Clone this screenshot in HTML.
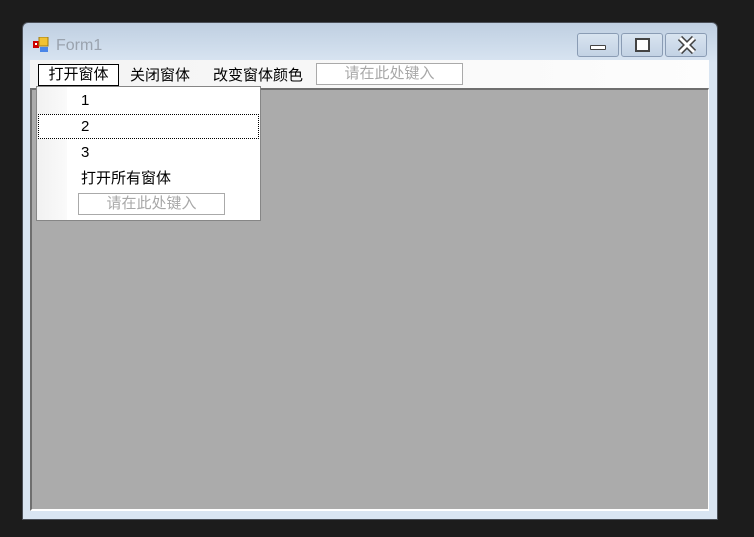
<!DOCTYPE html>
<html><head><meta charset="utf-8"><style>
*{margin:0;padding:0;box-sizing:border-box}
body{width:754px;height:537px;background:#1c1c1c;position:relative;overflow:hidden;font-family:"Liberation Sans","Noto Sans CJK SC",sans-serif;font-size:15px;color:#000}
.a{position:absolute}
.win{left:22px;top:22px;width:696px;height:498px;background:linear-gradient(#bfcfe1,#d9e5f2 40px,#d9e5f2);border:1px solid #4a4f57;border-radius:6px 6px 0 0}
.btn{top:33px;height:24px;border:1px solid #8a9cb4;border-radius:3px;background:linear-gradient(#d9e4f0,#c3d2e4)}
.menu{left:30px;top:60px;width:679px;height:29px;background:linear-gradient(90deg,#f3f3f3,#fdfdfd)}
.mdi{left:30px;top:88px;width:679px;height:423px;background:#ababab;border-left:2px solid #6f6f6f;border-top:2px solid #6f6f6f;border-right:1px solid #fff;border-bottom:2px solid #fff}
.t{white-space:nowrap;line-height:20px}
.tb{background:#fff;border:1px solid #aaa;color:#a8a8a8;text-align:center;line-height:20px}
</style></head><body>
<div class="a win"></div>
<svg class="a" style="left:33px;top:37px" width="17" height="17"><rect x="0" y="4" width="6" height="7" fill="#c00"/><rect x="2" y="6" width="2" height="2" fill="#fff"/><rect x="6" y="0" width="9" height="9" fill="#f1c232" stroke="#a07a10"/><rect x="7" y="10" width="8" height="5" fill="#4a86e8"/></svg>
<div class="a t" style="left:56px;top:36px;font-size:16px;color:#9aa3ae">Form1</div>
<div class="a btn" style="left:577px;width:42px"><div class="a" style="left:12px;top:11px;width:16px;height:5px;border:1px solid #444;background:#fff;border-radius:1px"></div></div>
<div class="a btn" style="left:621px;width:42px"><div class="a" style="left:13px;top:4px;width:15px;height:14px;border:2px solid #444;background:#fff"></div></div>
<div class="a btn" style="left:665px;width:42px"><svg class="a" style="left:10px;top:1px" width="22" height="20"><path d="M4 3L18 17M18 3L4 17" stroke="#444" stroke-width="6"/><path d="M4 3L18 17M18 3L4 17" stroke="#fff" stroke-width="3"/></svg></div>
<div class="a menu"></div>
<div class="a mdi"></div>
<div class="a t" style="left:38px;top:64px;width:81px;height:22px;border:1px solid #000;background:#fff;text-align:center;line-height:20px">打开窗体</div>
<div class="a t" style="left:130px;top:66px">关闭窗体</div>
<div class="a t" style="left:213px;top:66px">改变窗体颜色</div>
<div class="a tb" style="left:316px;top:63px;width:147px;height:22px">请在此处键入</div>
<div class="a" style="left:36px;top:86px;width:225px;height:135px;background:#fff;border:1px solid #868686"></div>
<div class="a" style="left:37px;top:87px;width:30px;height:133px;background:linear-gradient(90deg,#f1f1f1,#fafafa)"></div>
<div class="a" style="left:38px;top:114px;width:221px;height:25px;border:1px dotted #000;background:#fff"></div>
<div class="a t" style="left:81px;top:91px">1</div>
<div class="a t" style="left:81px;top:117px">2</div>
<div class="a t" style="left:81px;top:143px">3</div>
<div class="a t" style="left:81px;top:169px">打开所有窗体</div>
<div class="a tb" style="left:78px;top:193px;width:147px;height:22px">请在此处键入</div>
</body></html>
